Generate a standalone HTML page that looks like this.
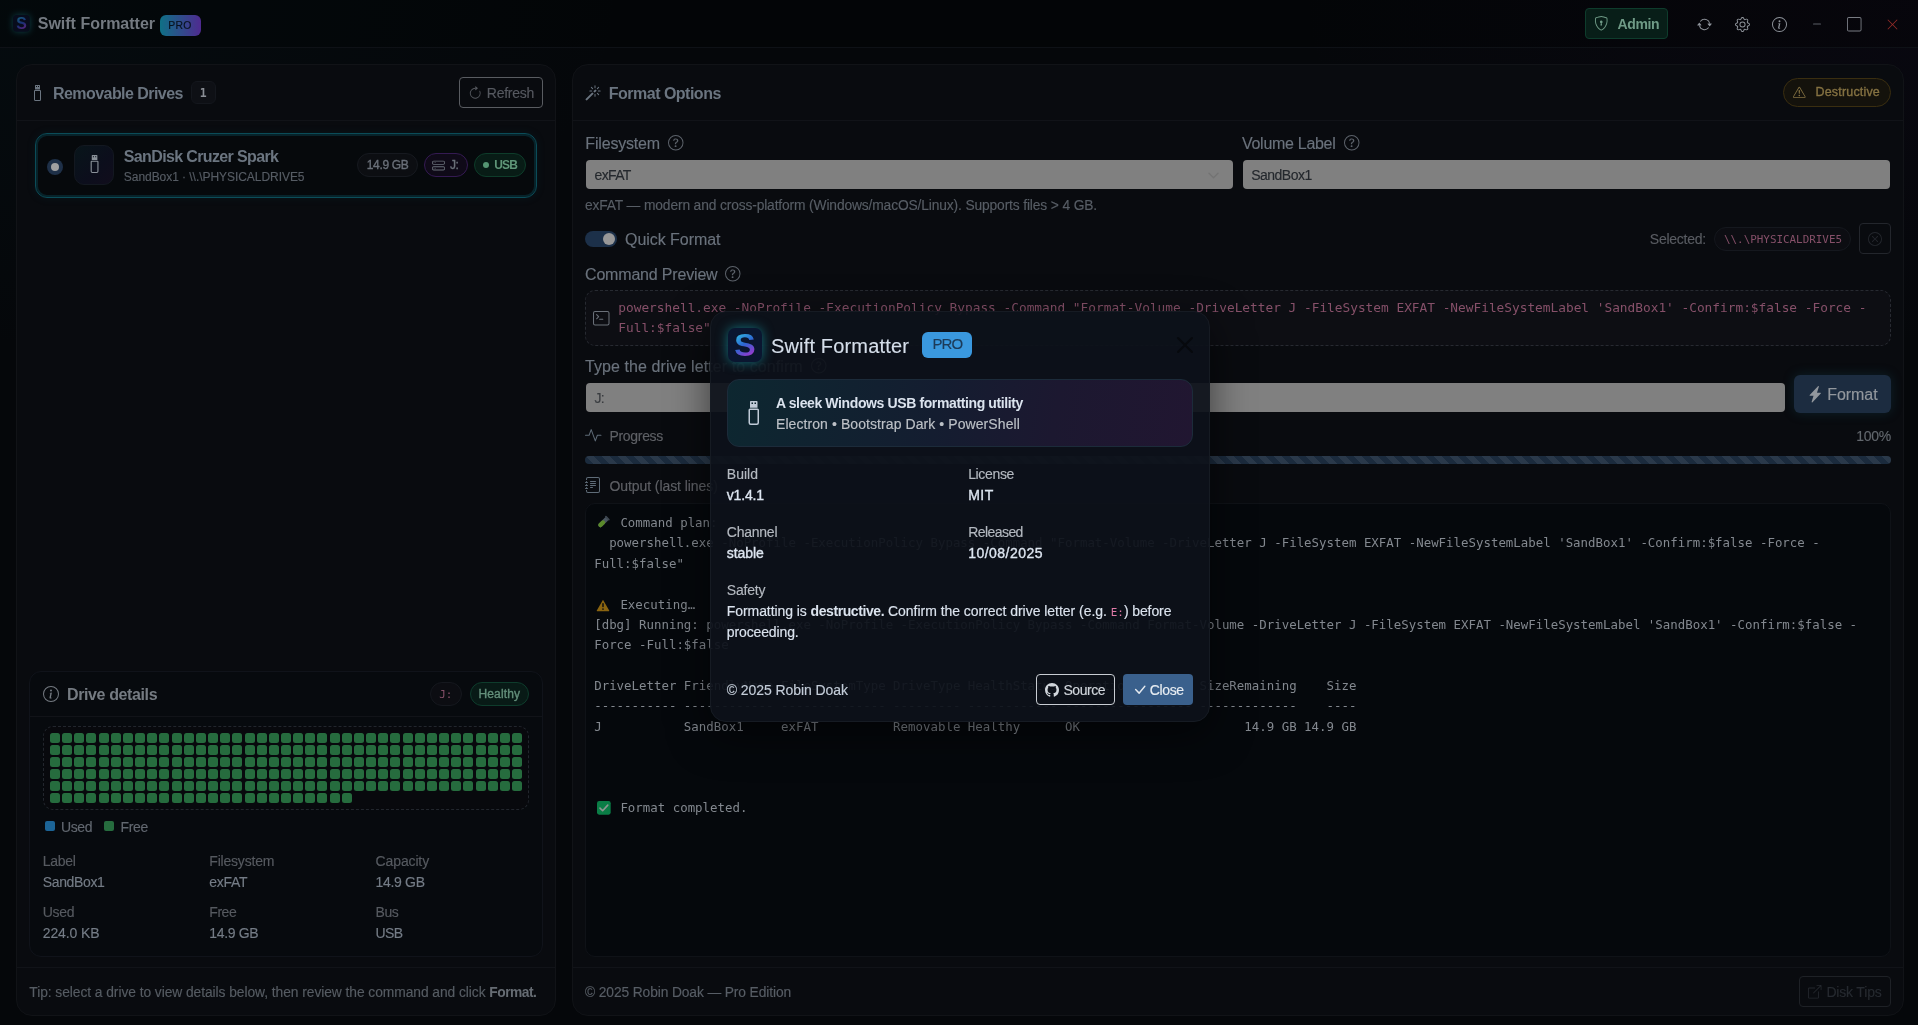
<!DOCTYPE html>
<html lang="en">
<head>
<meta charset="utf-8">
<title>Swift Formatter</title>
<style>
*{box-sizing:border-box;margin:0;padding:0}
html,body{width:1918px;height:1025px;overflow:hidden}
body{background:radial-gradient(900px 500px at 0% 0%,rgba(0,70,80,.07),transparent 70%),radial-gradient(900px 500px at 100% 0%,rgba(70,20,110,.06),transparent 70%),#05070a;color:#6b7580;font-family:"Liberation Sans",sans-serif;font-size:14px;position:relative}
svg{display:block;overflow:visible}
.t{position:absolute;white-space:pre;line-height:1}
.m{font-family:"DejaVu Sans Mono","Liberation Mono",monospace}
.card{position:absolute;background:#090b0f;border:1px solid #111317;border-radius:16px}
.hl{position:absolute;height:1px;background:#111318}
.pill{position:absolute;border-radius:999px;border:1px solid #15181f;background:#0c0e13}
.inp{position:absolute;background:#808080;border-radius:4px}
.cell{position:absolute;width:10px;height:10px;border-radius:2.5px;background:#266c3e}
</style>
</head>
<body>
<div id="root" style="position:absolute;left:0;top:0;width:1918px;height:1025px;will-change:transform">
<div style="position:absolute;left:0px;top:0px;width:1918px;height:48px;background:rgba(0,0,0,.22);border-bottom:1px solid #0e1116"></div>
<svg style="position:absolute;left:13.2px;top:15px;filter:drop-shadow(0 0 3px rgba(20,130,140,.45))" width="16.8" height="16.8" viewBox="0 0 34 34"><defs><linearGradient id="lg1" x1="0.3" y1="0" x2="0.7" y2="1"><stop offset="0" stop-color="#16627a"/><stop offset=".5" stop-color="#1a2f74"/><stop offset="1" stop-color="#6e1e7c"/></linearGradient></defs><rect width="34" height="34" rx="8" fill="#080c1c"/><text x="17" y="28.5" text-anchor="middle" font-family="Liberation Sans,sans-serif" font-weight="bold" font-size="32" fill="url(#lg1)">S</text></svg>
<span class="t" style="left:37.75px;top:16.00px;font-size:16px;color:#747a81;font-weight:700;letter-spacing:-0.006px;">Swift Formatter</span>
<div style="position:absolute;left:160px;top:15px;width:41px;height:21px;border-radius:6px;background:linear-gradient(90deg,#0f7086,#4f2a90)"></div>
<span class="t" style="left:168.20px;top:21.00px;font-size:10.4px;color:#08121e;-webkit-text-stroke:.15px;letter-spacing:0.290px;">PRO</span>
<div style="position:absolute;left:1585px;top:8px;width:83px;height:31px;border-radius:4px;background:#081e18;border:1px solid #0e3c2c"></div>
<svg style="position:absolute;left:1594px;top:16px;" width="14.5" height="14.5" viewBox="0 0 16 16" fill="#6f9a86"><path d="M5.338 1.59a61.44 61.44 0 0 0-2.837.856.481.481 0 0 0-.328.39c-.554 4.157.726 7.19 2.253 9.188a10.725 10.725 0 0 0 2.287 2.233c.346.244.652.42.893.533.12.057.218.095.293.118a.55.55 0 0 0 .101.025.615.615 0 0 0 .1-.025c.076-.023.174-.061.294-.118.24-.113.547-.29.893-.533a10.726 10.726 0 0 0 2.287-2.233c1.527-1.997 2.807-5.031 2.253-9.188a.48.48 0 0 0-.328-.39c-.651-.213-1.75-.56-2.837-.855C9.552 1.29 8.531 1.067 8 1.067c-.53 0-1.552.223-2.662.524zM5.072.56C6.157.265 7.31 0 8 0s1.843.265 2.928.56c1.11.3 2.229.655 2.887.87a1.54 1.54 0 0 1 1.044 1.262c.596 4.477-.787 7.795-2.465 9.99a11.775 11.775 0 0 1-2.517 2.453 7.159 7.159 0 0 1-1.048.625c-.28.132-.581.24-.829.24s-.548-.108-.829-.24a7.158 7.158 0 0 1-1.048-.625 11.777 11.777 0 0 1-2.517-2.453C1.928 10.487.545 7.169 1.141 2.692A1.54 1.54 0 0 1 2.185 1.43 62.456 62.456 0 0 1 5.072.56z"/><path d="M9.5 6.5a1.5 1.5 0 0 1-1 1.415l.385 1.99a.5.5 0 0 1-.491.595h-.788a.5.5 0 0 1-.49-.595l.384-1.99a1.5 1.5 0 1 1 2-1.415z"/></svg>
<span class="t" style="left:1617.50px;top:17.00px;font-size:14px;color:#6f9a86;font-weight:700;letter-spacing:-0.353px;">Admin</span>
<svg style="position:absolute;left:1696.5px;top:16.5px;" width="15" height="15" viewBox="0 0 16 16" fill="#8f949b"><path d="M11.534 7h3.932a.25.25 0 0 1 .192.41l-1.966 2.36a.25.25 0 0 1-.384 0l-1.966-2.36a.25.25 0 0 1 .192-.41zm-11 2h3.932a.25.25 0 0 0 .192-.41L2.692 6.23a.25.25 0 0 0-.384 0L.342 8.59A.25.25 0 0 0 .534 9z"/><path fill-rule="evenodd" d="M8 3c-1.552 0-2.94.707-3.857 1.818a.5.5 0 1 1-.771-.636A6.002 6.002 0 0 1 13.917 7H12.9A5.002 5.002 0 0 0 8 3zM3.1 9a5.002 5.002 0 0 0 8.757 2.182.5.5 0 1 1 .771.636A6.002 6.002 0 0 1 2.083 9H3.1z"/></svg>
<svg style="position:absolute;left:1734.5px;top:16.5px;" width="15" height="15" viewBox="0 0 16 16" fill="#8f949b"><path d="M8 4.754a3.246 3.246 0 1 0 0 6.492 3.246 3.246 0 0 0 0-6.492zM5.754 8a2.246 2.246 0 1 1 4.492 0 2.246 2.246 0 0 1-4.492 0z"/><path d="M9.796 1.343c-.527-1.79-3.065-1.79-3.592 0l-.094.319a.873.873 0 0 1-1.255.52l-.292-.16c-1.64-.892-3.433.902-2.54 2.541l.159.292a.873.873 0 0 1-.52 1.255l-.319.094c-1.79.527-1.79 3.065 0 3.592l.319.094a.873.873 0 0 1 .52 1.255l-.16.292c-.892 1.64.901 3.434 2.541 2.54l.292-.159a.873.873 0 0 1 1.255.52l.094.319c.527 1.79 3.065 1.79 3.592 0l.094-.319a.873.873 0 0 1 1.255-.52l.292.16c1.64.893 3.434-.902 2.54-2.541l-.159-.292a.873.873 0 0 1 .52-1.255l.319-.094c1.79-.527 1.79-3.065 0-3.592l-.319-.094a.873.873 0 0 1-.52-1.255l.16-.292c.893-1.64-.902-3.433-2.541-2.54l-.292.159a.873.873 0 0 1-1.255-.52l-.094-.319zm-2.633.283c.246-.835 1.428-.835 1.674 0l.094.319a1.873 1.873 0 0 0 2.693 1.115l.291-.16c.764-.415 1.6.42 1.184 1.185l-.159.292a1.873 1.873 0 0 0 1.116 2.692l.318.094c.835.246.835 1.428 0 1.674l-.319.094a1.873 1.873 0 0 0-1.115 2.693l.16.291c.415.764-.42 1.6-1.185 1.184l-.291-.159a1.873 1.873 0 0 0-2.693 1.116l-.094.318c-.246.835-1.428.835-1.674 0l-.094-.319a1.873 1.873 0 0 0-2.692-1.115l-.292.16c-.764.415-1.6-.42-1.184-1.185l.159-.291A1.873 1.873 0 0 0 1.945 8.930l-.319-.094c-.835-.246-.835-1.428 0-1.674l.319-.094A1.873 1.873 0 0 0 3.060 4.377l-.16-.292c-.415-.764.42-1.6 1.185-1.184l.292.159a1.873 1.873 0 0 0 2.692-1.115l.094-.319z"/></svg>
<svg style="position:absolute;left:1771.7px;top:16.5px;" width="15" height="15" viewBox="0 0 16 16" fill="#8f949b"><path d="M8 15A7 7 0 1 1 8 1a7 7 0 0 1 0 14zm0 1A8 8 0 1 0 8 0a8 8 0 0 0 0 16z"/><path d="m8.93 6.588-2.29.287-.082.38.45.083c.294.07.352.176.288.469l-.738 3.468c-.194.897.105 1.319.808 1.319.545 0 1.178-.252 1.465-.598l.088-.416c-.2.176-.492.246-.686.246-.275 0-.375-.193-.304-.533L8.930 6.588zM9 4.5a1 1 0 1 1-2 0 1 1 0 0 1 2 0z"/></svg>
<svg style="position:absolute;left:1809px;top:16px;" width="16" height="16" viewBox="0 0 16 16" fill="#5a5f66"><path d="M4 8a.5.5 0 0 1 .5-.5h7a.5.5 0 0 1 0 1h-7A.5.5 0 0 1 4 8z"/></svg>
<svg style="position:absolute;left:1847.3px;top:17px;" width="14.5" height="14.5" viewBox="0 0 16 16" fill="#787c83"><path d="M14 1a1 1 0 0 1 1 1v12a1 1 0 0 1-1 1H2a1 1 0 0 1-1-1V2a1 1 0 0 1 1-1h12zM2 0a2 2 0 0 0-2 2v12a2 2 0 0 0 2 2h12a2 2 0 0 0 2-2V2a2 2 0 0 0-2-2H2z"/></svg>
<svg style="position:absolute;left:1885.5px;top:17.5px;" width="13" height="13" viewBox="0 0 16 16" fill="#962c28"><path d="M2.146 2.854a.5.5 0 1 1 .708-.708L8 7.293l5.146-5.147a.5.5 0 0 1 .708.708L8.707 8l5.147 5.146a.5.5 0 0 1-.708.708L8 8.707l-5.146 5.147a.5.5 0 0 1-.708-.708L7.293 8 2.146 2.854Z"/></svg>
<div class="card" style="left:16px;top:64px;width:540px;height:952px"></div>
<div class="hl" style="left:17px;top:120px;width:538px"></div>
<div class="hl" style="left:17px;top:967px;width:538px"></div>
<svg style="position:absolute;left:28.6px;top:85px;" width="16" height="16" viewBox="0 0 16 16" fill="#6b7580"><path d="M6 .5a.5.5 0 0 1 .5-.5h4a.5.5 0 0 1 .5.5v4H6v-4ZM7 1v1h1V1H7Zm2 0v1h1V1H9ZM6 5a1 1 0 0 0-1 1v8.5A1.5 1.5 0 0 0 6.5 16h4a1.5 1.5 0 0 0 1.5-1.5V6a1 1 0 0 0-1-1H6Zm0 1h5v8.5a.5.5 0 0 1-.5.5h-4a.5.5 0 0 1-.5-.5V6Z"/></svg>
<span class="t" style="left:53.00px;top:86.00px;font-size:16px;color:#6b7580;font-weight:700;letter-spacing:-0.558px;">Removable Drives</span>
<div style="position:absolute;left:191px;top:81px;width:25px;height:23px;border-radius:6px;background:#0e1015;border:1px solid #14171d"></div>
<span class="t m" style="left:199.83px;top:88.00px;font-size:11.5px;color:#8a8e95;font-weight:700;">1</span>
<div style="position:absolute;left:459px;top:77px;width:84px;height:31px;border-radius:4px;border:1px solid #595c61"></div>
<svg style="position:absolute;left:467.6px;top:86px;" width="14.5" height="14.5" viewBox="0 0 16 16" fill="#54575d"><path fill-rule="evenodd" d="M8 3a5 5 0 1 0 4.546 2.914.5.5 0 0 1 .908-.417A6 6 0 1 1 8 2v1z"/><path d="M8 4.466V.534a.25.25 0 0 1 .41-.192l2.36 1.966c.12.1.12.284 0 .384L8.41 4.658A.25.25 0 0 1 8 4.466z"/></svg>
<span class="t" style="left:486.80px;top:86.00px;font-size:14px;color:#565960;-webkit-text-stroke:.15px;letter-spacing:-0.276px;">Refresh</span>
<div style="position:absolute;left:35px;top:133px;width:502px;height:65px;border-radius:12px;border:1px solid #0b4c58;background:#06090c;box-shadow:inset 0 0 0 2px rgba(11,76,88,.4),0 0 10px rgba(14,90,105,.12)"></div>
<div style="position:absolute;left:47px;top:159px;width:16px;height:16px;border-radius:50%;background:#1e3048"></div>
<div style="position:absolute;left:51px;top:163px;width:8px;height:8px;border-radius:50%;background:#a0a0a0"></div>
<div style="position:absolute;left:74px;top:145px;width:40px;height:40px;border-radius:10px;border:1px solid #131820;background:linear-gradient(135deg,#08151a,#0c0e1c 60%,#110d1c)"></div>
<svg style="position:absolute;left:85.3px;top:155px;" width="18" height="18" viewBox="0 0 16 16" fill="#8a9199"><path d="M6 .5a.5.5 0 0 1 .5-.5h4a.5.5 0 0 1 .5.5v4H6v-4ZM7 1v1h1V1H7Zm2 0v1h1V1H9ZM6 5a1 1 0 0 0-1 1v8.5A1.5 1.5 0 0 0 6.5 16h4a1.5 1.5 0 0 0 1.5-1.5V6a1 1 0 0 0-1-1H6Zm0 1h5v8.5a.5.5 0 0 1-.5.5h-4a.5.5 0 0 1-.5-.5V6Z"/></svg>
<span class="t" style="left:123.80px;top:149.00px;font-size:16px;color:#6b7580;font-weight:700;letter-spacing:-0.634px;">SanDisk Cruzer Spark</span>
<span class="t" style="left:123.80px;top:171.00px;font-size:12px;color:#565c64;-webkit-text-stroke:.15px;letter-spacing:-0.048px;">SandBox1 · \\.\PHYSICALDRIVE5</span>
<div class="pill" style="left:357px;top:153px;width:61px;height:24px;border-color:#16191f;background:#0c0e12"></div>
<span class="t" style="left:366.80px;top:159.00px;font-size:12px;color:#6a7079;-webkit-text-stroke:.35px;letter-spacing:-0.362px;">14.9 GB</span>
<div class="pill" style="left:424px;top:153px;width:44px;height:24px;border-color:#341a52;background:#0f0a18"></div>
<svg style="position:absolute;left:432px;top:158.5px;" width="13" height="13" viewBox="0 0 16 16" fill="#6a7079"><path d="M14 10a1 1 0 0 1 1 1v1a1 1 0 0 1-1 1H2a1 1 0 0 1-1-1v-1a1 1 0 0 1 1-1h12zM2 9a2 2 0 0 0-2 2v1a2 2 0 0 0 2 2h12a2 2 0 0 0 2-2v-1a2 2 0 0 0-2-2H2z"/><path d="M5 11.500a.5.5 0 1 1-1 0 .5.5 0 0 1 1 0zm-2 0a.5.5 0 1 1-1 0 .5.5 0 0 1 1 0zM14 3a1 1 0 0 1 1 1v1a1 1 0 0 1-1 1H2a1 1 0 0 1-1-1V4a1 1 0 0 1 1-1h12zM2 2a2 2 0 0 0-2 2v1a2 2 0 0 0 2 2h12a2 2 0 0 0 2-2V4a2 2 0 0 0-2-2H2z"/><path d="M5 4.500a.5.5 0 1 1-1 0 .5.5 0 0 1 1 0zm-2 0a.5.5 0 1 1-1 0 .5.5 0 0 1 1 0z"/></svg>
<span class="t" style="left:450.10px;top:159.00px;font-size:12px;color:#6a7079;-webkit-text-stroke:.35px;letter-spacing:-0.472px;">J:</span>
<div class="pill" style="left:474px;top:153px;width:52px;height:24px;border-color:#0e3c2a;background:#081c16"></div>
<div style="position:absolute;left:482.8px;top:161.6px;width:6.4px;height:6.4px;border-radius:50%;background:#559673"></div>
<span class="t" style="left:494.20px;top:159.00px;font-size:12px;color:#5f9678;font-weight:700;letter-spacing:-0.748px;">USB</span>
<div style="position:absolute;left:29px;top:671px;width:514px;height:286px;border-radius:12px;border:1px solid #10131a;background:#070a0e"></div>
<div class="hl" style="left:30px;top:716px;width:512px"></div>
<svg style="position:absolute;left:42.7px;top:686px;" width="16" height="16" viewBox="0 0 16 16" fill="#747a81"><path d="M8 15A7 7 0 1 1 8 1a7 7 0 0 1 0 14zm0 1A8 8 0 1 0 8 0a8 8 0 0 0 0 16z"/><path d="m8.93 6.588-2.29.287-.082.38.45.083c.294.07.352.176.288.469l-.738 3.468c-.194.897.105 1.319.808 1.319.545 0 1.178-.252 1.465-.598l.088-.416c-.2.176-.492.246-.686.246-.275 0-.375-.193-.304-.533L8.930 6.588zM9 4.5a1 1 0 1 1-2 0 1 1 0 0 1 2 0z"/></svg>
<span class="t" style="left:67.00px;top:687.00px;font-size:16px;color:#757b82;font-weight:700;letter-spacing:-0.381px;">Drive details</span>
<div class="pill" style="left:430px;top:682px;width:32px;height:24px;border-color:#15181e;background:#0c0d12"></div>
<span class="t m" style="left:439.20px;top:690.00px;font-size:10.9px;color:#865069;">J:</span>
<div class="pill" style="left:470px;top:682px;width:59px;height:24px;border-color:#0e3c2c;background:#081a16"></div>
<span class="t" style="left:478.40px;top:688.00px;font-size:12px;color:#648f7b;-webkit-text-stroke:.35px;letter-spacing:0.159px;">Healthy</span>
<div style="position:absolute;left:43px;top:726px;width:486px;height:84px;border-radius:10px;border:1px dashed #22262d;background:#08090d"></div>
<i class="cell" style="left:50.00px;top:733.00px"></i><i class="cell" style="left:62.16px;top:733.00px"></i><i class="cell" style="left:74.32px;top:733.00px"></i><i class="cell" style="left:86.47px;top:733.00px"></i><i class="cell" style="left:98.63px;top:733.00px"></i><i class="cell" style="left:110.79px;top:733.00px"></i><i class="cell" style="left:122.95px;top:733.00px"></i><i class="cell" style="left:135.11px;top:733.00px"></i><i class="cell" style="left:147.26px;top:733.00px"></i><i class="cell" style="left:159.42px;top:733.00px"></i><i class="cell" style="left:171.58px;top:733.00px"></i><i class="cell" style="left:183.74px;top:733.00px"></i><i class="cell" style="left:195.90px;top:733.00px"></i><i class="cell" style="left:208.05px;top:733.00px"></i><i class="cell" style="left:220.21px;top:733.00px"></i><i class="cell" style="left:232.37px;top:733.00px"></i><i class="cell" style="left:244.53px;top:733.00px"></i><i class="cell" style="left:256.69px;top:733.00px"></i><i class="cell" style="left:268.84px;top:733.00px"></i><i class="cell" style="left:281.00px;top:733.00px"></i><i class="cell" style="left:293.16px;top:733.00px"></i><i class="cell" style="left:305.32px;top:733.00px"></i><i class="cell" style="left:317.48px;top:733.00px"></i><i class="cell" style="left:329.63px;top:733.00px"></i><i class="cell" style="left:341.79px;top:733.00px"></i><i class="cell" style="left:353.95px;top:733.00px"></i><i class="cell" style="left:366.11px;top:733.00px"></i><i class="cell" style="left:378.27px;top:733.00px"></i><i class="cell" style="left:390.42px;top:733.00px"></i><i class="cell" style="left:402.58px;top:733.00px"></i><i class="cell" style="left:414.74px;top:733.00px"></i><i class="cell" style="left:426.90px;top:733.00px"></i><i class="cell" style="left:439.06px;top:733.00px"></i><i class="cell" style="left:451.21px;top:733.00px"></i><i class="cell" style="left:463.37px;top:733.00px"></i><i class="cell" style="left:475.53px;top:733.00px"></i><i class="cell" style="left:487.69px;top:733.00px"></i><i class="cell" style="left:499.85px;top:733.00px"></i><i class="cell" style="left:512.00px;top:733.00px"></i><i class="cell" style="left:50.00px;top:745.05px"></i><i class="cell" style="left:62.16px;top:745.05px"></i><i class="cell" style="left:74.32px;top:745.05px"></i><i class="cell" style="left:86.47px;top:745.05px"></i><i class="cell" style="left:98.63px;top:745.05px"></i><i class="cell" style="left:110.79px;top:745.05px"></i><i class="cell" style="left:122.95px;top:745.05px"></i><i class="cell" style="left:135.11px;top:745.05px"></i><i class="cell" style="left:147.26px;top:745.05px"></i><i class="cell" style="left:159.42px;top:745.05px"></i><i class="cell" style="left:171.58px;top:745.05px"></i><i class="cell" style="left:183.74px;top:745.05px"></i><i class="cell" style="left:195.90px;top:745.05px"></i><i class="cell" style="left:208.05px;top:745.05px"></i><i class="cell" style="left:220.21px;top:745.05px"></i><i class="cell" style="left:232.37px;top:745.05px"></i><i class="cell" style="left:244.53px;top:745.05px"></i><i class="cell" style="left:256.69px;top:745.05px"></i><i class="cell" style="left:268.84px;top:745.05px"></i><i class="cell" style="left:281.00px;top:745.05px"></i><i class="cell" style="left:293.16px;top:745.05px"></i><i class="cell" style="left:305.32px;top:745.05px"></i><i class="cell" style="left:317.48px;top:745.05px"></i><i class="cell" style="left:329.63px;top:745.05px"></i><i class="cell" style="left:341.79px;top:745.05px"></i><i class="cell" style="left:353.95px;top:745.05px"></i><i class="cell" style="left:366.11px;top:745.05px"></i><i class="cell" style="left:378.27px;top:745.05px"></i><i class="cell" style="left:390.42px;top:745.05px"></i><i class="cell" style="left:402.58px;top:745.05px"></i><i class="cell" style="left:414.74px;top:745.05px"></i><i class="cell" style="left:426.90px;top:745.05px"></i><i class="cell" style="left:439.06px;top:745.05px"></i><i class="cell" style="left:451.21px;top:745.05px"></i><i class="cell" style="left:463.37px;top:745.05px"></i><i class="cell" style="left:475.53px;top:745.05px"></i><i class="cell" style="left:487.69px;top:745.05px"></i><i class="cell" style="left:499.85px;top:745.05px"></i><i class="cell" style="left:512.00px;top:745.05px"></i><i class="cell" style="left:50.00px;top:757.10px"></i><i class="cell" style="left:62.16px;top:757.10px"></i><i class="cell" style="left:74.32px;top:757.10px"></i><i class="cell" style="left:86.47px;top:757.10px"></i><i class="cell" style="left:98.63px;top:757.10px"></i><i class="cell" style="left:110.79px;top:757.10px"></i><i class="cell" style="left:122.95px;top:757.10px"></i><i class="cell" style="left:135.11px;top:757.10px"></i><i class="cell" style="left:147.26px;top:757.10px"></i><i class="cell" style="left:159.42px;top:757.10px"></i><i class="cell" style="left:171.58px;top:757.10px"></i><i class="cell" style="left:183.74px;top:757.10px"></i><i class="cell" style="left:195.90px;top:757.10px"></i><i class="cell" style="left:208.05px;top:757.10px"></i><i class="cell" style="left:220.21px;top:757.10px"></i><i class="cell" style="left:232.37px;top:757.10px"></i><i class="cell" style="left:244.53px;top:757.10px"></i><i class="cell" style="left:256.69px;top:757.10px"></i><i class="cell" style="left:268.84px;top:757.10px"></i><i class="cell" style="left:281.00px;top:757.10px"></i><i class="cell" style="left:293.16px;top:757.10px"></i><i class="cell" style="left:305.32px;top:757.10px"></i><i class="cell" style="left:317.48px;top:757.10px"></i><i class="cell" style="left:329.63px;top:757.10px"></i><i class="cell" style="left:341.79px;top:757.10px"></i><i class="cell" style="left:353.95px;top:757.10px"></i><i class="cell" style="left:366.11px;top:757.10px"></i><i class="cell" style="left:378.27px;top:757.10px"></i><i class="cell" style="left:390.42px;top:757.10px"></i><i class="cell" style="left:402.58px;top:757.10px"></i><i class="cell" style="left:414.74px;top:757.10px"></i><i class="cell" style="left:426.90px;top:757.10px"></i><i class="cell" style="left:439.06px;top:757.10px"></i><i class="cell" style="left:451.21px;top:757.10px"></i><i class="cell" style="left:463.37px;top:757.10px"></i><i class="cell" style="left:475.53px;top:757.10px"></i><i class="cell" style="left:487.69px;top:757.10px"></i><i class="cell" style="left:499.85px;top:757.10px"></i><i class="cell" style="left:512.00px;top:757.10px"></i><i class="cell" style="left:50.00px;top:769.15px"></i><i class="cell" style="left:62.16px;top:769.15px"></i><i class="cell" style="left:74.32px;top:769.15px"></i><i class="cell" style="left:86.47px;top:769.15px"></i><i class="cell" style="left:98.63px;top:769.15px"></i><i class="cell" style="left:110.79px;top:769.15px"></i><i class="cell" style="left:122.95px;top:769.15px"></i><i class="cell" style="left:135.11px;top:769.15px"></i><i class="cell" style="left:147.26px;top:769.15px"></i><i class="cell" style="left:159.42px;top:769.15px"></i><i class="cell" style="left:171.58px;top:769.15px"></i><i class="cell" style="left:183.74px;top:769.15px"></i><i class="cell" style="left:195.90px;top:769.15px"></i><i class="cell" style="left:208.05px;top:769.15px"></i><i class="cell" style="left:220.21px;top:769.15px"></i><i class="cell" style="left:232.37px;top:769.15px"></i><i class="cell" style="left:244.53px;top:769.15px"></i><i class="cell" style="left:256.69px;top:769.15px"></i><i class="cell" style="left:268.84px;top:769.15px"></i><i class="cell" style="left:281.00px;top:769.15px"></i><i class="cell" style="left:293.16px;top:769.15px"></i><i class="cell" style="left:305.32px;top:769.15px"></i><i class="cell" style="left:317.48px;top:769.15px"></i><i class="cell" style="left:329.63px;top:769.15px"></i><i class="cell" style="left:341.79px;top:769.15px"></i><i class="cell" style="left:353.95px;top:769.15px"></i><i class="cell" style="left:366.11px;top:769.15px"></i><i class="cell" style="left:378.27px;top:769.15px"></i><i class="cell" style="left:390.42px;top:769.15px"></i><i class="cell" style="left:402.58px;top:769.15px"></i><i class="cell" style="left:414.74px;top:769.15px"></i><i class="cell" style="left:426.90px;top:769.15px"></i><i class="cell" style="left:439.06px;top:769.15px"></i><i class="cell" style="left:451.21px;top:769.15px"></i><i class="cell" style="left:463.37px;top:769.15px"></i><i class="cell" style="left:475.53px;top:769.15px"></i><i class="cell" style="left:487.69px;top:769.15px"></i><i class="cell" style="left:499.85px;top:769.15px"></i><i class="cell" style="left:512.00px;top:769.15px"></i><i class="cell" style="left:50.00px;top:781.20px"></i><i class="cell" style="left:62.16px;top:781.20px"></i><i class="cell" style="left:74.32px;top:781.20px"></i><i class="cell" style="left:86.47px;top:781.20px"></i><i class="cell" style="left:98.63px;top:781.20px"></i><i class="cell" style="left:110.79px;top:781.20px"></i><i class="cell" style="left:122.95px;top:781.20px"></i><i class="cell" style="left:135.11px;top:781.20px"></i><i class="cell" style="left:147.26px;top:781.20px"></i><i class="cell" style="left:159.42px;top:781.20px"></i><i class="cell" style="left:171.58px;top:781.20px"></i><i class="cell" style="left:183.74px;top:781.20px"></i><i class="cell" style="left:195.90px;top:781.20px"></i><i class="cell" style="left:208.05px;top:781.20px"></i><i class="cell" style="left:220.21px;top:781.20px"></i><i class="cell" style="left:232.37px;top:781.20px"></i><i class="cell" style="left:244.53px;top:781.20px"></i><i class="cell" style="left:256.69px;top:781.20px"></i><i class="cell" style="left:268.84px;top:781.20px"></i><i class="cell" style="left:281.00px;top:781.20px"></i><i class="cell" style="left:293.16px;top:781.20px"></i><i class="cell" style="left:305.32px;top:781.20px"></i><i class="cell" style="left:317.48px;top:781.20px"></i><i class="cell" style="left:329.63px;top:781.20px"></i><i class="cell" style="left:341.79px;top:781.20px"></i><i class="cell" style="left:353.95px;top:781.20px"></i><i class="cell" style="left:366.11px;top:781.20px"></i><i class="cell" style="left:378.27px;top:781.20px"></i><i class="cell" style="left:390.42px;top:781.20px"></i><i class="cell" style="left:402.58px;top:781.20px"></i><i class="cell" style="left:414.74px;top:781.20px"></i><i class="cell" style="left:426.90px;top:781.20px"></i><i class="cell" style="left:439.06px;top:781.20px"></i><i class="cell" style="left:451.21px;top:781.20px"></i><i class="cell" style="left:463.37px;top:781.20px"></i><i class="cell" style="left:475.53px;top:781.20px"></i><i class="cell" style="left:487.69px;top:781.20px"></i><i class="cell" style="left:499.85px;top:781.20px"></i><i class="cell" style="left:512.00px;top:781.20px"></i><i class="cell" style="left:50.00px;top:793.25px"></i><i class="cell" style="left:62.16px;top:793.25px"></i><i class="cell" style="left:74.32px;top:793.25px"></i><i class="cell" style="left:86.47px;top:793.25px"></i><i class="cell" style="left:98.63px;top:793.25px"></i><i class="cell" style="left:110.79px;top:793.25px"></i><i class="cell" style="left:122.95px;top:793.25px"></i><i class="cell" style="left:135.11px;top:793.25px"></i><i class="cell" style="left:147.26px;top:793.25px"></i><i class="cell" style="left:159.42px;top:793.25px"></i><i class="cell" style="left:171.58px;top:793.25px"></i><i class="cell" style="left:183.74px;top:793.25px"></i><i class="cell" style="left:195.90px;top:793.25px"></i><i class="cell" style="left:208.05px;top:793.25px"></i><i class="cell" style="left:220.21px;top:793.25px"></i><i class="cell" style="left:232.37px;top:793.25px"></i><i class="cell" style="left:244.53px;top:793.25px"></i><i class="cell" style="left:256.69px;top:793.25px"></i><i class="cell" style="left:268.84px;top:793.25px"></i><i class="cell" style="left:281.00px;top:793.25px"></i><i class="cell" style="left:293.16px;top:793.25px"></i><i class="cell" style="left:305.32px;top:793.25px"></i><i class="cell" style="left:317.48px;top:793.25px"></i><i class="cell" style="left:329.63px;top:793.25px"></i><i class="cell" style="left:341.79px;top:793.25px"></i>
<div style="position:absolute;left:45.1px;top:821px;width:10px;height:10px;border-radius:2px;background:#1c6496"></div>
<span class="t" style="left:61.00px;top:820.00px;font-size:14px;color:#626870;-webkit-text-stroke:.15px;letter-spacing:-0.422px;">Used</span>
<div style="position:absolute;left:104.3px;top:821px;width:10px;height:10px;border-radius:2px;background:#266c3e"></div>
<span class="t" style="left:120.50px;top:820.00px;font-size:14px;color:#626870;-webkit-text-stroke:.15px;letter-spacing:-0.299px;">Free</span>
<span class="t" style="left:42.80px;top:854.00px;font-size:14px;color:#565a60;-webkit-text-stroke:.15px;letter-spacing:-0.316px;">Label</span>
<span class="t" style="left:42.80px;top:875.00px;font-size:14px;color:#747c86;-webkit-text-stroke:.15px;letter-spacing:-0.367px;">SandBox1</span>
<span class="t" style="left:209.30px;top:854.00px;font-size:14px;color:#565a60;-webkit-text-stroke:.15px;letter-spacing:-0.197px;">Filesystem</span>
<span class="t" style="left:209.30px;top:875.00px;font-size:14px;color:#747c86;-webkit-text-stroke:.15px;letter-spacing:-0.266px;">exFAT</span>
<span class="t" style="left:375.60px;top:854.00px;font-size:14px;color:#565a60;-webkit-text-stroke:.15px;letter-spacing:-0.133px;">Capacity</span>
<span class="t" style="left:375.60px;top:875.00px;font-size:14px;color:#747c86;-webkit-text-stroke:.15px;letter-spacing:-0.325px;">14.9 GB</span>
<span class="t" style="left:42.80px;top:905.00px;font-size:14px;color:#565a60;-webkit-text-stroke:.15px;letter-spacing:-0.355px;">Used</span>
<span class="t" style="left:42.80px;top:926.00px;font-size:14px;color:#747c86;-webkit-text-stroke:.15px;letter-spacing:-0.126px;">224.0 KB</span>
<span class="t" style="left:209.30px;top:905.00px;font-size:14px;color:#565a60;-webkit-text-stroke:.15px;letter-spacing:-0.469px;">Free</span>
<span class="t" style="left:209.30px;top:926.00px;font-size:14px;color:#747c86;-webkit-text-stroke:.15px;letter-spacing:-0.325px;">14.9 GB</span>
<span class="t" style="left:375.60px;top:905.00px;font-size:14px;color:#565a60;-webkit-text-stroke:.15px;letter-spacing:-0.448px;">Bus</span>
<span class="t" style="left:375.60px;top:926.00px;font-size:14px;color:#747c86;-webkit-text-stroke:.15px;letter-spacing:-0.615px;">USB</span>
<span class="t" style="left:29.30px;top:986.00px;font-size:13.8px;color:#565c63;-webkit-text-stroke:.15px;letter-spacing:-0.055px;">Tip: select a drive to view details below, then review the command and click </span>
<span class="t" style="left:489.28px;top:986.00px;font-size:13.8px;color:#666c73;font-weight:700;letter-spacing:-0.493px;">Format.</span>
<div class="card" style="left:572px;top:64px;width:1332px;height:952px"></div>
<div class="hl" style="left:573px;top:120px;width:1330px"></div>
<div class="hl" style="left:573px;top:967px;width:1330px"></div>
<svg style="position:absolute;left:585px;top:85px;" width="16" height="16" viewBox="0 0 16 16" fill="#6b7580"><path d="M9.5 2.672a.5.5 0 1 0 1 0V.843a.5.5 0 0 0-1 0v1.829Zm4.5.035A.5.5 0 0 0 13.293 2L12 3.293a.5.5 0 1 0 .707.707L14 2.707ZM7.293 4A.5.5 0 1 0 8 3.293L6.707 2A.5.5 0 0 0 6 2.707L7.293 4Zm-.621 2.5a.5.5 0 1 0 0-1H4.843a.5.5 0 1 0 0 1h1.829Zm8.485 0a.5.5 0 1 0 0-1h-1.829a.5.5 0 0 0 0 1h1.829ZM13.293 10A.5.5 0 1 0 14 9.293L12.707 8a.5.5 0 1 0-.707.707L13.293 10ZM9.5 11.157a.5.5 0 0 0 1 0V9.328a.5.5 0 0 0-1 0v1.829Zm1.854-5.097a.5.5 0 0 0 0-.706l-.708-.708a.5.5 0 0 0-.707 0L8.646 5.94a.5.5 0 0 0 0 .707l.708.708a.5.5 0 0 0 .707 0l1.293-1.293Zm-3 3a.5.5 0 0 0 0-.706l-.708-.708a.5.5 0 0 0-.707 0L.646 13.94a.5.5 0 0 0 0 .707l.708.708a.5.5 0 0 0 .707 0L8.354 9.06Z"/></svg>
<span class="t" style="left:608.80px;top:86.00px;font-size:16px;color:#6b7580;font-weight:700;letter-spacing:-0.508px;">Format Options</span>
<div class="pill" style="left:1783px;top:78px;width:108px;height:29px;border-color:#3a2e10;background:#14120c"></div>
<svg style="position:absolute;left:1793.2px;top:85.9px;" width="12.6" height="12.6" viewBox="0 0 16 16" fill="#857242"><path d="M7.938 2.016A.13.13 0 0 1 8.002 2a.13.13 0 0 1 .063.016.146.146 0 0 1 .054.057l6.857 11.667c.036.06.035.124.002.183a.163.163 0 0 1-.054.06.116.116 0 0 1-.066.017H1.146a.115.115 0 0 1-.066-.017.163.163 0 0 1-.054-.06.176.176 0 0 1 .002-.183L7.884 2.073a.147.147 0 0 1 .054-.057zm1.044-.45a1.13 1.13 0 0 0-1.96 0L.165 13.233c-.457.778.091 1.767.98 1.767h13.713c.889 0 1.438-.99.98-1.767L8.982 1.566z"/><path d="M7.002 12a1 1 0 1 1 2 0 1 1 0 0 1-2 0zM7.1 5.995a.905.905 0 1 1 1.8 0l-.35 3.507a.552.552 0 0 1-1.1 0L7.1 5.995z"/></svg>
<span class="t" style="left:1815.50px;top:86.00px;font-size:12.5px;color:#857242;-webkit-text-stroke:.35px;letter-spacing:0.179px;">Destructive</span>
<span class="t" style="left:585.30px;top:136.00px;font-size:16px;color:#6a727c;-webkit-text-stroke:.15px;letter-spacing:-0.175px;">Filesystem</span>
<svg style="position:absolute;left:668px;top:135px;" width="15.5" height="15.5" viewBox="0 0 16 16" fill="#5c626a"><path d="M8 15A7 7 0 1 1 8 1a7 7 0 0 1 0 14zm0 1A8 8 0 1 0 8 0a8 8 0 0 0 0 16z"/><path d="M5.255 5.786a.237.237 0 0 0 .241.247h.825c.138 0 .248-.113.266-.25.09-.656.54-1.134 1.342-1.134.686 0 1.314.343 1.314 1.168 0 .635-.374.927-.965 1.371-.673.489-1.206 1.06-1.168 1.987l.003.217a.25.25 0 0 0 .25.246h.811a.25.25 0 0 0 .25-.25v-.105c0-.718.273-.927 1.01-1.486.609-.463 1.244-.977 1.244-2.056 0-1.511-1.276-2.241-2.673-2.241-1.267 0-2.655.59-2.75 2.286zm1.557 5.763c0 .533.425.927 1.01.927.609 0 1.028-.394 1.028-.927 0-.552-.42-.94-1.029-.94-.584 0-1.009.388-1.009.94z"/></svg>
<div class="inp" style="left:586px;top:160px;width:647px;height:29px"></div>
<span class="t" style="left:594.50px;top:168.00px;font-size:14px;color:#24282d;-webkit-text-stroke:.15px;letter-spacing:-0.624px;">exFAT</span>
<svg style="position:absolute;left:1206.5px;top:170.5px" width="13" height="9" viewBox="0 0 16 12"><path fill="none" stroke="#737373" stroke-linecap="round" stroke-linejoin="round" stroke-width="1.8" d="m2 3 6 6 6-6"/></svg>
<span class="t" style="left:1242.00px;top:136.00px;font-size:16px;color:#6a727c;-webkit-text-stroke:.15px;letter-spacing:-0.289px;">Volume Label</span>
<svg style="position:absolute;left:1344.2px;top:135px;" width="15.5" height="15.5" viewBox="0 0 16 16" fill="#5c626a"><path d="M8 15A7 7 0 1 1 8 1a7 7 0 0 1 0 14zm0 1A8 8 0 1 0 8 0a8 8 0 0 0 0 16z"/><path d="M5.255 5.786a.237.237 0 0 0 .241.247h.825c.138 0 .248-.113.266-.25.09-.656.54-1.134 1.342-1.134.686 0 1.314.343 1.314 1.168 0 .635-.374.927-.965 1.371-.673.489-1.206 1.06-1.168 1.987l.003.217a.25.25 0 0 0 .25.246h.811a.25.25 0 0 0 .25-.25v-.105c0-.718.273-.927 1.01-1.486.609-.463 1.244-.977 1.244-2.056 0-1.511-1.276-2.241-2.673-2.241-1.267 0-2.655.59-2.75 2.286zm1.557 5.763c0 .533.425.927 1.01.927.609 0 1.028-.394 1.028-.927 0-.552-.42-.94-1.029-.94-.584 0-1.009.388-1.009.94z"/></svg>
<div class="inp" style="left:1243px;top:160px;width:647px;height:29px"></div>
<span class="t" style="left:1251.20px;top:168.00px;font-size:14px;color:#24282d;-webkit-text-stroke:.15px;letter-spacing:-0.514px;">SandBox1</span>
<span class="t" style="left:585.00px;top:199.00px;font-size:13.8px;color:#575d65;-webkit-text-stroke:.15px;letter-spacing:-0.137px;">exFAT — modern and cross-platform (Windows/macOS/Linux). Supports files &gt; 4 GB.</span>
<div style="position:absolute;left:585px;top:231px;width:32px;height:16px;border-radius:8px;background:#1c3049"></div>
<div style="position:absolute;left:603px;top:233px;width:12px;height:12px;border-radius:50%;background:#989898"></div>
<span class="t" style="left:625.00px;top:232.00px;font-size:16px;color:#6a727c;-webkit-text-stroke:.15px;letter-spacing:-0.043px;">Quick Format</span>
<span class="t" style="left:1649.80px;top:232.00px;font-size:14px;color:#595c62;-webkit-text-stroke:.15px;letter-spacing:-0.242px;">Selected:</span>
<div class="pill" style="left:1714px;top:227px;width:137px;height:24px;border-color:#15181e;background:#0c0d12"></div>
<span class="t m" style="left:1724.00px;top:235.00px;font-size:10.9px;color:#865069;">\\.\PHYSICALDRIVE5</span>
<div style="position:absolute;left:1859px;top:223px;width:32px;height:31px;border-radius:4px;border:1px solid #23262c"></div>
<svg style="position:absolute;left:1868px;top:232px;" width="14" height="14" viewBox="0 0 16 16" fill="#24272d"><path d="M8 15A7 7 0 1 1 8 1a7 7 0 0 1 0 14zm0 1A8 8 0 1 0 8 0a8 8 0 0 0 0 16z"/><path d="M4.646 4.646a.5.5 0 0 1 .708 0L8 7.293l2.646-2.647a.5.5 0 0 1 .708.708L8.707 8l2.647 2.646a.5.5 0 0 1-.708.708L8 8.707l-2.646 2.647a.5.5 0 0 1-.708-.708L7.293 8 4.646 5.354a.5.5 0 0 1 0-.708z"/></svg>
<span class="t" style="left:585.00px;top:267.00px;font-size:16px;color:#6a727c;-webkit-text-stroke:.15px;letter-spacing:-0.177px;">Command Preview</span>
<svg style="position:absolute;left:725px;top:265.7px;" width="15.5" height="15.5" viewBox="0 0 16 16" fill="#5c626a"><path d="M8 15A7 7 0 1 1 8 1a7 7 0 0 1 0 14zm0 1A8 8 0 1 0 8 0a8 8 0 0 0 0 16z"/><path d="M5.255 5.786a.237.237 0 0 0 .241.247h.825c.138 0 .248-.113.266-.25.09-.656.54-1.134 1.342-1.134.686 0 1.314.343 1.314 1.168 0 .635-.374.927-.965 1.371-.673.489-1.206 1.06-1.168 1.987l.003.217a.25.25 0 0 0 .25.246h.811a.25.25 0 0 0 .25-.25v-.105c0-.718.273-.927 1.01-1.486.609-.463 1.244-.977 1.244-2.056 0-1.511-1.276-2.241-2.673-2.241-1.267 0-2.655.59-2.75 2.286zm1.557 5.763c0 .533.425.927 1.01.927.609 0 1.028-.394 1.028-.927 0-.552-.42-.94-1.029-.94-.584 0-1.009.388-1.009.94z"/></svg>
<div style="position:absolute;left:585px;top:290px;width:1306px;height:56px;border-radius:10px;border:1px dashed #272a31;background:#0d0e13"></div>
<svg style="position:absolute;left:593px;top:310px;" width="16.5" height="16.5" viewBox="0 0 16 16" fill="#6a7079"><path d="M6 9a.5.5 0 0 1 .5-.5h3a.5.5 0 0 1 0 1h-3A.5.5 0 0 1 6 9zM3.854 4.146a.5.5 0 1 0-.708.708L4.793 6.500 3.146 8.146a.5.5 0 1 0 .708.708l2-2a.5.5 0 0 0 0-.708l-2-2z"/><path d="M2 1a2 2 0 0 0-2 2v10a2 2 0 0 0 2 2h12a2 2 0 0 0 2-2V3a2 2 0 0 0-2-2H2zm12 1a1 1 0 0 1 1 1v10a1 1 0 0 1-1 1H2a1 1 0 0 1-1-1V3a1 1 0 0 1 1-1h12z"/></svg>
<span class="t m" style="left:618.30px;top:302.00px;font-size:12.8px;color:#865069;">powershell.exe -NoProfile -ExecutionPolicy Bypass -Command &quot;Format-Volume -DriveLetter J -FileSystem EXFAT -NewFileSystemLabel &#x27;SandBox1&#x27; -Confirm:$false -Force -</span>
<span class="t m" style="left:618.30px;top:322.00px;font-size:12.8px;color:#865069;">Full:$false&quot;</span>
<span class="t" style="left:585.00px;top:359.00px;font-size:16px;color:#6a727c;-webkit-text-stroke:.15px;letter-spacing:0.078px;">Type the drive letter to confirm</span>
<svg style="position:absolute;left:811px;top:357.8px;" width="15.5" height="15.5" viewBox="0 0 16 16" fill="#5c626a"><path d="M8 15A7 7 0 1 1 8 1a7 7 0 0 1 0 14zm0 1A8 8 0 1 0 8 0a8 8 0 0 0 0 16z"/><path d="M5.255 5.786a.237.237 0 0 0 .241.247h.825c.138 0 .248-.113.266-.25.09-.656.54-1.134 1.342-1.134.686 0 1.314.343 1.314 1.168 0 .635-.374.927-.965 1.371-.673.489-1.206 1.06-1.168 1.987l.003.217a.25.25 0 0 0 .25.246h.811a.25.25 0 0 0 .25-.25v-.105c0-.718.273-.927 1.01-1.486.609-.463 1.244-.977 1.244-2.056 0-1.511-1.276-2.241-2.673-2.241-1.267 0-2.655.59-2.75 2.286zm1.557 5.763c0 .533.425.927 1.01.927.609 0 1.028-.394 1.028-.927 0-.552-.42-.94-1.029-.94-.584 0-1.009.388-1.009.94z"/></svg>
<div class="inp" style="left:586px;top:383px;width:1199px;height:29px"></div>
<span class="t" style="left:594.50px;top:391.00px;font-size:14px;color:#393c40;-webkit-text-stroke:.15px;letter-spacing:-0.695px;">J:</span>
<div style="position:absolute;left:1794px;top:375px;width:97px;height:38px;border-radius:6px;background:#1c2c40;box-shadow:0 0 12px rgba(20,90,110,.28)"></div>
<svg style="position:absolute;left:1807px;top:386px;" width="16.5" height="16.5" viewBox="0 0 16 16" fill="#92979d"><path d="M11.251.068a.5.5 0 0 1 .227.58L9.677 6.500H13a.5.5 0 0 1 .364.843l-8 8.500a.5.5 0 0 1-.842-.49L6.323 9.500H3a.5.5 0 0 1-.364-.843l8-8.500a.5.5 0 0 1 .615-.09z"/></svg>
<span class="t" style="left:1827.20px;top:387.00px;font-size:16px;color:#92979d;-webkit-text-stroke:.15px;letter-spacing:-0.045px;">Format</span>
<svg style="position:absolute;left:585px;top:427px;" width="16.5" height="16.5" viewBox="0 0 16 16" fill="#5f6c78"><path fill-rule="evenodd" d="M6 2a.5.5 0 0 1 .47.33L10 12.036l1.530-4.208A.5.5 0 0 1 12 7.500h3.500a.5.5 0 0 1 0 1h-3.150l-1.880 5.170a.5.5 0 0 1-.94 0L6 3.964 4.470 8.171A.5.5 0 0 1 4 8.500H.500a.5.5 0 0 1 0-1h3.150l1.880-5.170A.5.5 0 0 1 6 2Z"/></svg>
<span class="t" style="left:609.50px;top:429.00px;font-size:14px;color:#5e6065;-webkit-text-stroke:.15px;letter-spacing:-0.316px;">Progress</span>
<span class="t" style="left:1856.20px;top:429.00px;font-size:14px;color:#62676d;-webkit-text-stroke:.15px;letter-spacing:-0.253px;">100%</span>
<div style="position:absolute;left:585px;top:456px;width:1306px;height:8px;border-radius:4px;background-color:#1b2b3d;background-image:linear-gradient(45deg,rgba(255,255,255,.065) 25%,transparent 25%,transparent 50%,rgba(255,255,255,.065) 50%,rgba(255,255,255,.065) 75%,transparent 75%,transparent);background-size:16px 16px"></div>
<svg style="position:absolute;left:584.8px;top:477px;" width="16" height="16" viewBox="0 0 16 16" fill="#5f6c78"><path d="M5 10.500a.5.5 0 0 1 .5-.5h2a.5.5 0 0 1 0 1h-2a.5.5 0 0 1-.5-.5zm0-2a.5.5 0 0 1 .5-.5h5a.5.5 0 0 1 0 1h-5a.5.5 0 0 1-.5-.5zm0-2a.5.5 0 0 1 .5-.5h5a.5.5 0 0 1 0 1h-5a.5.5 0 0 1-.5-.5zm0-2a.5.5 0 0 1 .5-.5h5a.5.5 0 0 1 0 1h-5a.5.5 0 0 1-.5-.5z"/><path d="M3 0h10a2 2 0 0 1 2 2v12a2 2 0 0 1-2 2H3a2 2 0 0 1-2-2v-1h1v1a1 1 0 0 0 1 1h10a1 1 0 0 0 1-1V2a1 1 0 0 0-1-1H3a1 1 0 0 0-1 1v1H1V2a2 2 0 0 1 2-2z"/><path d="M1 5v-.5a.5.5 0 0 1 1 0V5h.5a.5.5 0 0 1 0 1h-2a.5.5 0 0 1 0-1H1zm0 3v-.5a.5.5 0 0 1 1 0V8h.5a.5.5 0 0 1 0 1h-2a.5.5 0 0 1 0-1H1zm0 3v-.5a.5.5 0 0 1 1 0v.5h.5a.5.5 0 0 1 0 1h-2a.5.5 0 0 1 0-1H1z"/></svg>
<span class="t" style="left:609.50px;top:479.00px;font-size:14px;color:#5e6065;-webkit-text-stroke:.15px;letter-spacing:-0.079px;">Output (last lines)</span>
<div style="position:absolute;left:585px;top:503px;width:1306px;height:454px;border-radius:10px;border:1px solid #0f1217;background:#05080c"></div>
<svg style="position:absolute;left:596px;top:514.5px" width="14.5" height="14.5" viewBox="0 0 16 16"><g transform="rotate(45 8 8)"><rect x="5.6" y="1.2" width="4.8" height="13.6" rx="2.4" fill="#4a5560"/><rect x="5.6" y="6" width="4.8" height="8.8" rx="2.4" fill="#5b8a2a"/><rect x="4.8" y="0.6" width="6.4" height="2" rx="1" fill="#3d4650"/></g></svg>
<span class="t m" style="left:620.40px;top:517.00px;font-size:12.4px;color:#83888f;letter-spacing:.013px;">Command plan:</span>
<span class="t m" style="left:594.20px;top:537.00px;font-size:12.4px;color:#83888f;letter-spacing:.013px;">  powershell.exe -NoProfile -ExecutionPolicy Bypass -Command &quot;Format-Volume -DriveLetter J -FileSystem EXFAT -NewFileSystemLabel &#x27;SandBox1&#x27; -Confirm:$false -Force -</span>
<span class="t m" style="left:594.20px;top:558.00px;font-size:12.4px;color:#83888f;letter-spacing:.013px;">Full:$false&quot;</span>
<svg style="position:absolute;left:596.3px;top:598.6px" width="14" height="12.6" viewBox="0 0 16 15"><path d="M8 .8 15.4 13.6a.6.6 0 0 1-.5.9H1.1a.6.6 0 0 1-.5-.9Z" fill="#8a6410"/><rect x="7.1" y="4.8" width="1.8" height="5" rx=".9" fill="#0a0c10"/><circle cx="8" cy="12" r="1" fill="#0a0c10"/></svg>
<span class="t m" style="left:620.40px;top:599.00px;font-size:12.4px;color:#83888f;letter-spacing:.013px;">Executing…</span>
<span class="t m" style="left:594.20px;top:619.00px;font-size:12.4px;color:#83888f;letter-spacing:.013px;">[dbg] Running: powershell.exe -NoProfile -ExecutionPolicy Bypass -Command Format-Volume -DriveLetter J -FileSystem EXFAT -NewFileSystemLabel &#x27;SandBox1&#x27; -Confirm:$false -</span>
<span class="t m" style="left:594.20px;top:639.00px;font-size:12.4px;color:#83888f;letter-spacing:.013px;">Force -Full:$false</span>
<span class="t m" style="left:594.20px;top:680.00px;font-size:12.4px;color:#83888f;letter-spacing:.013px;">DriveLetter FriendlyName FileSystemType DriveType HealthStatus OperationalStatus SizeRemaining    Size</span>
<span class="t m" style="left:594.20px;top:700.00px;font-size:12.4px;color:#83888f;letter-spacing:.013px;">----------- ------------ -------------- --------- ------------ ----------------- -------------    ----</span>
<span class="t m" style="left:594.20px;top:721.00px;font-size:12.4px;color:#83888f;letter-spacing:.013px;">J           SandBox1     exFAT          Removable Healthy      OK                      14.9 GB 14.9 GB</span>
<svg style="position:absolute;left:596.5px;top:800.5px" width="13.7" height="13.7" viewBox="0 0 16 16"><rect width="16" height="16" rx="2.5" fill="#0a7d46"/><path d="M3.5 8.3 6.6 11.4 12.6 4.8" fill="none" stroke="#8c9691" stroke-width="1.9" stroke-linecap="round" stroke-linejoin="round"/></svg>
<span class="t m" style="left:620.40px;top:802.00px;font-size:12.4px;color:#83888f;letter-spacing:.013px;">Format completed.</span>
<span class="t" style="left:585.00px;top:986.00px;font-size:13.8px;color:#575d65;-webkit-text-stroke:.15px;letter-spacing:-0.115px;">© 2025 Robin Doak — Pro Edition</span>
<div style="position:absolute;left:1799px;top:976px;width:92px;height:31px;border-radius:4px;border:1px solid #1e2126"></div>
<svg style="position:absolute;left:1808px;top:984.5px;" width="13.5" height="13.5" viewBox="0 0 16 16" fill="#24282e"><path fill-rule="evenodd" d="M8.636 3.500a.5.5 0 0 0-.5-.5H1.500A1.500 1.500 0 0 0 0 4.500v10A1.500 1.500 0 0 0 1.500 16h10a1.500 1.500 0 0 0 1.500-1.500V7.864a.5.5 0 0 0-1 0V14.500a.5.5 0 0 1-.5.5h-10a.5.5 0 0 1-.5-.5v-10a.5.5 0 0 1 .5-.5h6.636a.5.5 0 0 0 .5-.5z"/><path fill-rule="evenodd" d="M16 .500a.5.5 0 0 0-.5-.5h-5a.5.5 0 0 0 0 1h3.793L6.146 9.146a.5.5 0 1 0 .708.708L15 1.707V5.500a.5.5 0 0 0 1 0v-5z"/></svg>
<span class="t" style="left:1826.40px;top:985.00px;font-size:14px;color:#262a30;-webkit-text-stroke:.15px;letter-spacing:-0.177px;">Disk Tips</span>
<div style="position:absolute;left:710px;top:311px;width:500px;height:411px;border-radius:16px;background:rgba(13,17,26,.93);border:1px solid #161b23;box-shadow:0 12px 40px rgba(0,0,0,.55)"></div>
<svg style="position:absolute;left:728px;top:328px;filter:drop-shadow(0 0 6px rgba(24,190,205,.55))" width="34" height="34" viewBox="0 0 34 34"><defs><linearGradient id="lg2" x1="0.3" y1="0" x2="0.7" y2="1"><stop offset="0" stop-color="#35e0f5"/><stop offset=".45" stop-color="#2f6fe0"/><stop offset=".75" stop-color="#8a45dc"/><stop offset="1" stop-color="#d23ae0"/></linearGradient></defs><rect width="34" height="34" rx="7" fill="#0a1630"/><text x="17" y="28.3" text-anchor="middle" font-family="Liberation Sans,sans-serif" font-weight="bold" font-size="32" fill="url(#lg2)" fill-opacity=".92">S</text></svg>
<span class="t" style="left:771.00px;top:336.00px;font-size:20px;color:#d5deea;-webkit-text-stroke:.15px;letter-spacing:0.161px;">Swift Formatter</span>
<div style="position:absolute;left:922px;top:332px;width:50px;height:26px;border-radius:6px;background:#3a98de"></div>
<span class="t" style="left:932.50px;top:336.00px;font-size:15px;color:#1c3a58;-webkit-text-stroke:.15px;letter-spacing:-0.972px;">PRO</span>
<svg style="position:absolute;left:1177px;top:337px" width="16" height="16" viewBox="0 0 16 16" fill="#07090d"><path d="M.293.293a1 1 0 0 1 1.414 0L8 6.586 14.293.293a1 1 0 1 1 1.414 1.414L9.414 8l6.293 6.293a1 1 0 0 1-1.414 1.414L8 9.414l-6.293 6.293a1 1 0 0 1-1.414-1.414L6.586 8 .293 1.707a1 1 0 0 1 0-1.414z"/></svg>
<div style="position:absolute;left:727px;top:379px;width:466px;height:68px;border-radius:12px;border:1px solid #1c2b3a;background:linear-gradient(100deg,#0d2730 0%,#141d30 45%,#1c1830 70%,#211631 100%)"></div>
<svg style="position:absolute;left:740.5px;top:400.8px;" width="24" height="24" viewBox="0 0 16 16" fill="#c0cbd8"><path d="M6 .5a.5.5 0 0 1 .5-.5h4a.5.5 0 0 1 .5.5v4H6v-4ZM7 1v1h1V1H7Zm2 0v1h1V1H9ZM6 5a1 1 0 0 0-1 1v8.5A1.5 1.5 0 0 0 6.5 16h4a1.5 1.5 0 0 0 1.5-1.5V6a1 1 0 0 0-1-1H6Zm0 1h5v8.5a.5.5 0 0 1-.5.5h-4a.5.5 0 0 1-.5-.5V6Z"/></svg>
<span class="t" style="left:776.00px;top:396.00px;font-size:14px;color:#dbe3ee;font-weight:700;letter-spacing:-0.382px;">A sleek Windows USB formatting utility</span>
<span class="t" style="left:776.00px;top:417.00px;font-size:14px;color:#bcc0c6;-webkit-text-stroke:.15px;letter-spacing:0.078px;">Electron • Bootstrap Dark • PowerShell</span>
<span class="t" style="left:726.80px;top:467.00px;font-size:14px;color:#b4b9c0;-webkit-text-stroke:.15px;letter-spacing:0.016px;">Build</span>
<span class="t" style="left:726.80px;top:488.00px;font-size:14px;color:#dde5f0;-webkit-text-stroke:.35px;letter-spacing:-0.173px;">v1.4.1</span>
<span class="t" style="left:968.20px;top:467.00px;font-size:14px;color:#b4b9c0;-webkit-text-stroke:.15px;letter-spacing:-0.355px;">License</span>
<span class="t" style="left:968.20px;top:488.00px;font-size:14px;color:#dde5f0;-webkit-text-stroke:.35px;letter-spacing:0.464px;">MIT</span>
<span class="t" style="left:726.80px;top:525.00px;font-size:14px;color:#b4b9c0;-webkit-text-stroke:.15px;letter-spacing:-0.243px;">Channel</span>
<span class="t" style="left:726.80px;top:546.00px;font-size:14px;color:#dde5f0;-webkit-text-stroke:.35px;letter-spacing:-0.060px;">stable</span>
<span class="t" style="left:968.20px;top:525.00px;font-size:14px;color:#b4b9c0;-webkit-text-stroke:.15px;letter-spacing:-0.562px;">Released</span>
<span class="t" style="left:968.20px;top:546.00px;font-size:14px;color:#dde5f0;-webkit-text-stroke:.35px;letter-spacing:0.462px;">10/08/2025</span>
<span class="t" style="left:726.80px;top:583.00px;font-size:14px;color:#b4b9c0;-webkit-text-stroke:.15px;letter-spacing:-0.182px;">Safety</span>
<span class="t" style="left:726.80px;top:604.00px;font-size:14px;color:#dbe3ee;-webkit-text-stroke:.15px;letter-spacing:-0.077px;">Formatting is </span>
<span class="t" style="left:810.53px;top:604.00px;font-size:14px;color:#dbe3ee;font-weight:700;letter-spacing:-0.413px;">destructive.</span>
<span class="t" style="left:884.17px;top:604.00px;font-size:14px;color:#dbe3ee;-webkit-text-stroke:.15px;letter-spacing:-0.035px;"> Confirm the correct drive letter (e.g. </span>
<span class="t m" style="left:1110.75px;top:608.00px;font-size:10.9px;color:#e07aa8;">E:</span>
<span class="t" style="left:1123.88px;top:604.00px;font-size:14px;color:#dbe3ee;-webkit-text-stroke:.15px;letter-spacing:-0.098px;">) before</span>
<span class="t" style="left:726.80px;top:625.00px;font-size:14px;color:#dbe3ee;-webkit-text-stroke:.15px;letter-spacing:-0.122px;">proceeding.</span>
<span class="t" style="left:726.80px;top:683.00px;font-size:14px;color:#c3ccd8;-webkit-text-stroke:.15px;letter-spacing:-0.082px;">© 2025 Robin Doak</span>
<div style="position:absolute;left:1036px;top:674px;width:79px;height:31px;border-radius:4px;border:1px solid #c8ccd2"></div>
<svg style="position:absolute;left:1045px;top:682.5px;" width="14" height="14" viewBox="0 0 16 16" fill="#d0d5db"><path d="M8 0C3.58 0 0 3.58 0 8c0 3.54 2.29 6.53 5.47 7.59.4.07.55-.17.55-.38 0-.19-.01-.82-.01-1.49-2.01.37-2.53-.49-2.69-.94-.09-.23-.48-.94-.82-1.13-.28-.15-.68-.52-.01-.53.63-.01 1.08.58 1.23.82.72 1.21 1.87.87 2.33.66.07-.52.28-.87.51-1.07-1.78-.2-3.64-.89-3.64-3.95 0-.87.31-1.59.82-2.15-.08-.2-.36-1.02.08-2.12 0 0 .67-.21 2.2.82.64-.18 1.32-.27 2-.27.68 0 1.36.09 2 .27 1.53-1.04 2.2-.82 2.2-.82.44 1.1.16 1.92.08 2.12.51.56.82 1.27.82 2.15 0 3.07-1.87 3.75-3.65 3.95.29.25.54.73.54 1.48 0 1.07-.01 1.93-.01 2.2 0 .21.15.46.55.38A8.012 8.012 0 0 0 16 8c0-4.42-3.58-8-8-8z"/></svg>
<span class="t" style="left:1063.50px;top:683.00px;font-size:14px;color:#d0d5db;-webkit-text-stroke:.15px;letter-spacing:-0.477px;">Source</span>
<div style="position:absolute;left:1123px;top:674px;width:70px;height:31px;border-radius:4px;background:#3a608c"></div>
<svg style="position:absolute;left:1131.5px;top:681.5px;" width="15.5" height="15.5" viewBox="0 0 16 16" fill="#e4e9ef"><path d="M12.736 3.970a.733.733 0 0 1 1.047 0c.286.289.29.756.01 1.050L7.880 12.010a.733.733 0 0 1-1.065.020L3.217 8.384a.757.757 0 0 1 0-1.060.733.733 0 0 1 1.047 0l3.052 3.093 5.400-6.425a.247.247 0 0 1 .02-.022Z"/></svg>
<span class="t" style="left:1149.80px;top:683.00px;font-size:14px;color:#e8edf2;-webkit-text-stroke:.15px;letter-spacing:-0.379px;">Close</span>
</div>
</body>
</html>
